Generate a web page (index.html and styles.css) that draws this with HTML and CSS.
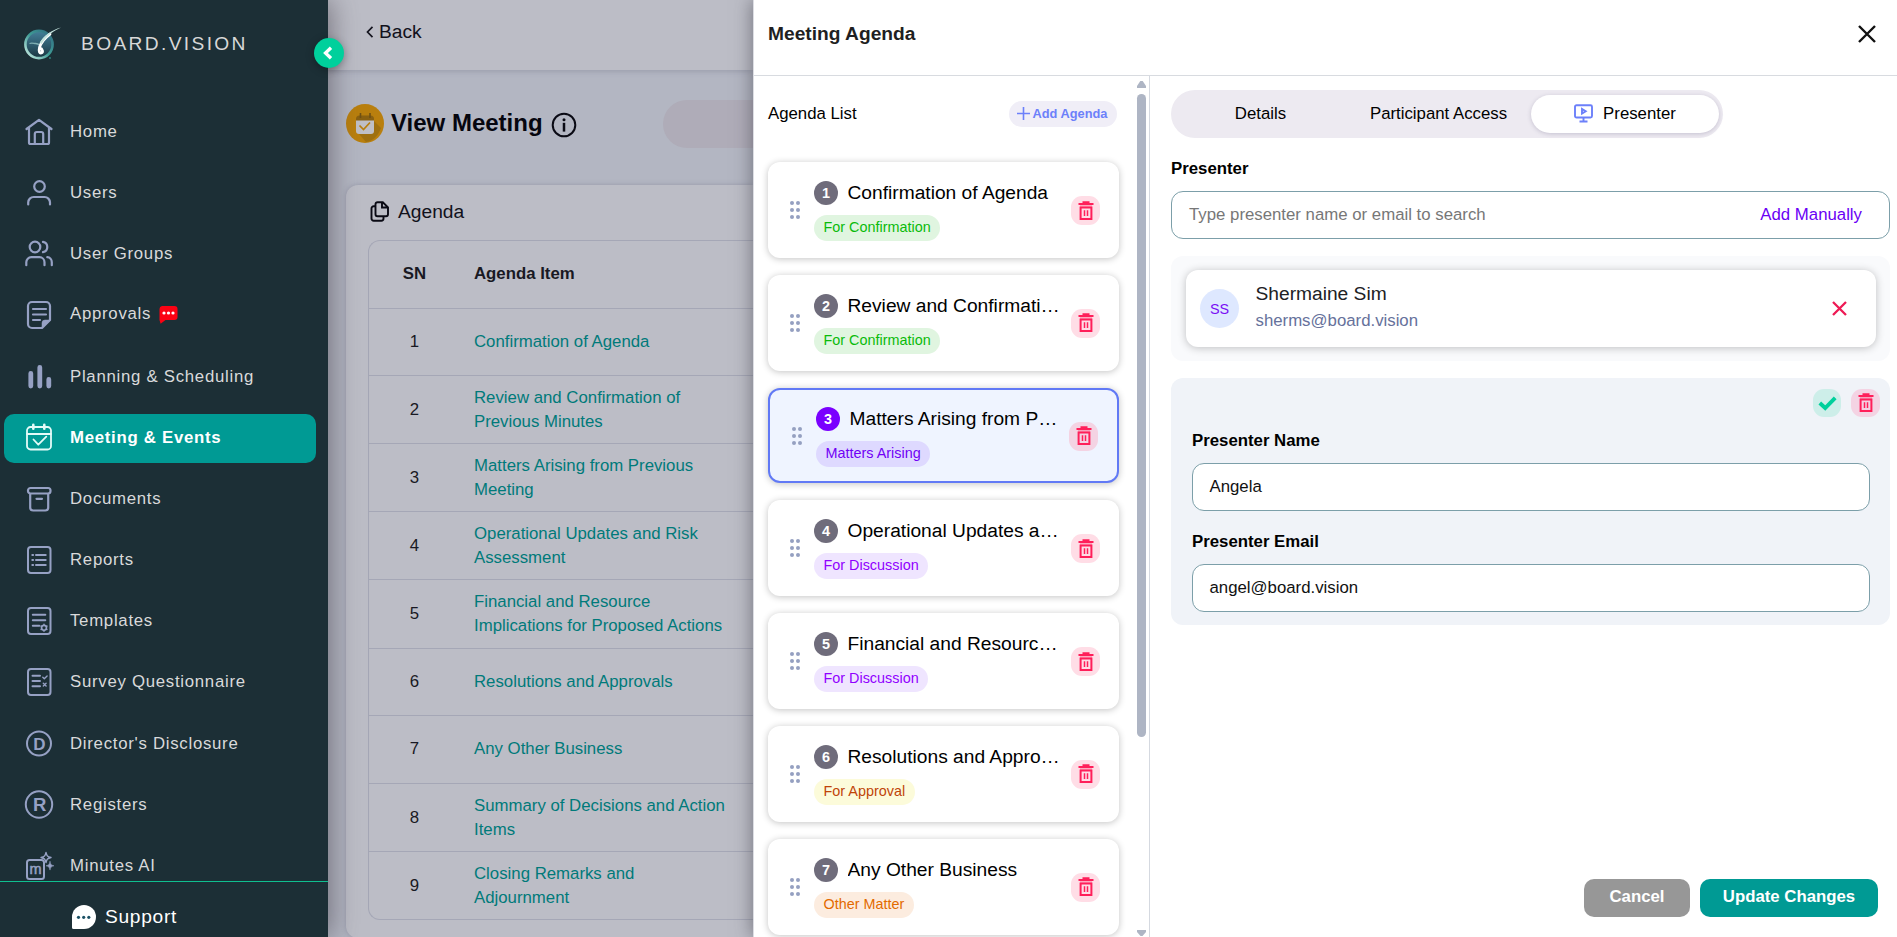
FILE: index.html
```html
<!DOCTYPE html>
<html lang="en">
<head>
<meta charset="utf-8">
<title>Board.Vision - View Meeting</title>
<link rel="stylesheet" href="styles.css">
</head>
<body>
<svg class="sprite" aria-hidden="true">
  <defs>
    <symbol id="trash" viewBox="0 0 18 20">
      <path d="M5.500 1.300h7M1.500 3h15" stroke="currentColor" stroke-width="1.900" fill="none"/>
      <path d="M3 5h12" stroke="currentColor" stroke-width="1.200" opacity=".45"/>
      <path d="M3.600 6.500h10.800v11.500H3.600z" stroke="currentColor" stroke-width="2" fill="none"/>
      <path d="M7.500 9.300v5.800M10.500 9.300v5.800" stroke="currentColor" stroke-width="1.500"/>
    </symbol>
    <symbol id="drag" viewBox="0 0 10 18">
      <g fill="#95a0c1"><circle cx="2" cy="2" r="2"/><circle cx="8" cy="2" r="2"/><circle cx="2" cy="9" r="2"/><circle cx="8" cy="9" r="2"/><circle cx="2" cy="16" r="2"/><circle cx="8" cy="16" r="2"/></g>
    </symbol>
  </defs>
</svg>
<div class="app">
  <aside class="sidebar">
    <div class="brand">
      <svg class="logo" width="38" height="34" viewBox="0 0 38 34">
        <defs>
          <linearGradient id="ring" x1="1" y1="0" x2="0" y2="1"><stop offset="0" stop-color="#2f6a80"/><stop offset=".5" stop-color="#3f9c96"/><stop offset="1" stop-color="#d3f3ea"/></linearGradient>
          <linearGradient id="disc" x1="0" y1="0" x2="0" y2="1"><stop offset="0" stop-color="#44809a"/><stop offset=".6" stop-color="#2a5566"/><stop offset="1" stop-color="#1a3540"/></linearGradient>
        </defs>
        <circle cx="15" cy="17.500" r="13.600" fill="url(#disc)" stroke="url(#ring)" stroke-width="2.600"/>
        <path d="M5.500 16.500c2-1 4-.2 6 0s3 .6 4 1.500" stroke="#7fb0b4" stroke-width="1.300" fill="none"/>
        <path d="M26 7C20.500 11 17 15.500 15.500 20.500c-1 4 .2 5.800 1.800 5.400 2-.6 1.500-4.200-1.600-4.700" stroke="#fff" stroke-width="2.800" fill="none" stroke-linecap="round"/>
        <path d="M37 .4C29 4 22 9.500 17.500 17l-1.800-1.600C20 8.500 27.500 3 37 .4z" fill="#c3e3dd"/>
        <circle cx="26" cy="31" r="1.100" fill="#2d7a76"/>
      </svg>
      <span class="brand-name">BOARD.VISION</span>
    </div>
    <nav class="nav">
      <a class="nav-item"><svg class="ico" viewBox="0 0 28 28"><path d="M1.500 11 14 1.800 26.500 11M4 10v14.500A1.500 1.500 0 0 0 5.500 26h17a1.500 1.500 0 0 0 1.500-1.500V10M9.800 25.500V16a2 2 0 0 1 2-2h4.400a2 2 0 0 1 2 2v9.500"/></svg>Home</a>
      <a class="nav-item"><svg class="ico" viewBox="0 0 28 28"><circle cx="14.500" cy="7.500" r="5.300"/><path d="M3.200 25.500V23.500a5.500 5.500 0 0 1 5.500-5.500h10.800a5.500 5.500 0 0 1 5.500 5.500v2"/></svg>Users</a>
      <a class="nav-item"><svg class="ico" viewBox="0 0 28 28"><circle cx="10" cy="7" r="5.300"/><path d="M1.300 25.200v-3a5 5 0 0 1 5-5h8.200a5 5 0 0 1 5 5v3M18 1.800a5.300 5.300 0 0 1 0 10.400M22.300 17.200a5 5 0 0 1 4.500 5v3"/></svg>User Groups</a>
      <a class="nav-item approvals"><svg class="ico" viewBox="0 0 28 28"><path d="M17 27H7a4 4 0 0 1-4-4V5a4 4 0 0 1 4-4h14a4 4 0 0 1 4 4v14z"/><path d="M8 8h13M8 13.500h13M8 19h7"/><path class="solid" d="M17 27v-5a3 3 0 0 1 3-3h5z"/></svg><span class="lift">Approvals</span>
        <svg class="chat-dot" width="19" height="18" viewBox="0 0 19 18"><path d="M3 0h12.500a3 3 0 0 1 3 3v8a3 3 0 0 1-3 3H6.500L1.600 17.800.5 14V3a3 3 0 0 1 2.500-3z" fill="#fb0213"/><g fill="#fff"><circle cx="5" cy="7" r="1.600"/><circle cx="9.500" cy="7" r="1.600"/><circle cx="14" cy="7" r="1.600"/></g></svg></a>
      <a class="nav-item"><svg class="ico bars" viewBox="0 0 28 28"><path d="M5.800 10.500v12.500M14.800 4.500v18.500M23.800 16.500v6.500"/></svg>Planning &amp; Scheduling</a>
      <a class="nav-item active"><svg class="ico cal" viewBox="0 0 28 28"><rect x="2" y="3" width="24" height="22.500" rx="3.500"/><path d="M2 10h24M8.500 15.500l4.800 5.200 8-8"/><path class="pins" d="M8.300.8v4M19.300.8v4"/></svg>Meeting &amp; Events</a>
      <a class="nav-item"><svg class="ico" viewBox="0 0 28 28"><rect x="3" y="3" width="22.500" height="5.500" rx="2.500"/><path d="M5.200 9v13.500A3 3 0 0 0 8.200 25.500h12a3 3 0 0 0 3-3V9M11.500 13.800h5.500"/></svg>Documents</a>
      <a class="nav-item"><svg class="ico thin" viewBox="0 0 28 28"><rect x="3" y="1" width="22.500" height="26" rx="3"/><path d="M11 9h9.700M11 14h9.700M11 19h9.700M7.300 9h.8M7.300 14h.8M7.300 19h.8"/></svg>Reports</a>
      <a class="nav-item"><svg class="ico thin" viewBox="0 0 28 28"><rect x="3" y="1" width="22.500" height="26" rx="3"/><path d="M7.800 7.800h12.500M7.800 13.300h12.500M7.800 18.800h6.500"/><circle cx="19" cy="20.800" r="2.300"/><path class="fine" d="M19 17.300v7M16 19.100l6 3.400M16 22.500l6-3.400"/><circle class="hole" cx="19" cy="20.800" r="1.600"/></svg>Templates</a>
      <a class="nav-item wide"><svg class="ico thin" viewBox="0 0 28 28"><rect x="3" y="1" width="22.500" height="26" rx="3"/><path d="M7.500 7.800h7.500M7.500 13h7.500M7.500 18.300h7.500"/><path class="fine" d="m17.800 9.300 1.500 1.500 2.800-2.800M18.300 15.300l2.800 2.800M21.100 15.300l-2.800 2.800"/></svg>Survey Questionnaire</a>
      <a class="nav-item"><svg class="ico thin" viewBox="0 0 28 28"><circle cx="14" cy="13.500" r="12"/><text x="14.300" y="19.500" font-size="17">D</text></svg>Director's Disclosure</a>
      <a class="nav-item"><svg class="ico thin" viewBox="0 0 28 28"><circle cx="14" cy="13.500" r="13.200"/><text x="14.700" y="20" font-size="18.500">R</text></svg>Registers</a>
      <a class="nav-item"><svg class="ico thin" viewBox="0 0 28 28"><rect x="2" y="8" width="17" height="19" rx="2.500"/><text class="light" x="10.500" y="21.500" font-size="14.500">m</text><path class="fine" d="M21 .5c.8 3.500 1.500 4 5 5-3.500 1-4.200 1.500-5 5-.8-3.500-1.500-4-5-5 3.500-1 4.200-1.500 5-5z"/><path class="spark" d="M25 9.500c.7 3 1 3.500 4 4.300-3 .8-3.300 1.300-4 4.300-.7-3-1-3.500-4-4.300 3-.8 3.300-1.300 4-4.300z"/></svg>Minutes AI</a>
    </nav>
    <div class="support">
      <svg width="24" height="24" viewBox="0 0 24 24"><path d="M12 0a12 12 0 0 1 0 24H1.500A1.500 1.500 0 0 1 0 22.500V12A12 12 0 0 1 12 0z" fill="#fff"/><g fill="#1c5266"><circle cx="6.500" cy="12.300" r="1.600"/><circle cx="11.700" cy="12.300" r="1.600"/><circle cx="16.800" cy="12.300" r="1.600"/></g></svg>
      <span>Support</span>
    </div>
    <button class="collapse"><svg width="10" height="14" viewBox="0 0 10 14"><path d="M8 1.800 2.500 7 8 12.200" stroke="#fff" stroke-width="3.300" fill="none"/></svg></button>
  </aside>

  <main class="page">
    <header class="topbar"><svg width="8" height="12" viewBox="0 0 8 12"><path d="M6.500.8 1.500 6l5 5.200" stroke="#15151f" stroke-width="1.700" fill="none"/></svg><span>Back</span></header>
    <section class="title-row">
      <svg width="38" height="39" viewBox="0 0 38 39">
        <ellipse cx="19" cy="19.500" rx="19" ry="19.500" fill="#b97f0e"/>
        <path d="M28 17 35 24C32 32 27 37 20 38L13 30z" fill="#9f7010"/>
        <path d="M10 15a3.500 3.500 0 0 1 3.500-3.500h11A3.500 3.500 0 0 1 28 15v2H10z" fill="#8a6111"/>
        <path d="M14.500 9v5M24 9v5" stroke="#6f5116" stroke-width="1.600"/>
        <path d="M10 16.500h18V27a3 3 0 0 1-3 3H13a3 3 0 0 1-3-3z" fill="#c0c0c6"/>
        <path d="m13.500 21.500 4 4 6.500-7" stroke="#b97f0e" stroke-width="1.700" fill="none"/>
      </svg>
      <h1>View Meeting</h1>
      <svg class="info" width="26" height="26" viewBox="0 0 26 26"><circle cx="13" cy="13" r="11.300" stroke="#0a0a14" stroke-width="2" fill="none"/><path d="M13 10.800v8.800" stroke="#0a0a14" stroke-width="2.500"/><circle cx="13" cy="7.700" r="1.500" fill="#0a0a14"/></svg>
      <div class="ghost-tabs"></div>
    </section>
    <section class="panel">
      <div class="panel-head"><svg width="20" height="21" viewBox="0 0 20 21"><path d="M7.500 1.200h5.300L18 6.300v6.900a2 2 0 0 1-2 2H7.500a2 2 0 0 1-2-2v-10a2 2 0 0 1 2-2zM12 1.500V6.500h5.500M5 5.200H3.700a2.200 2.200 0 0 0-2.200 2.200v10.200a2.200 2.200 0 0 0 2.200 2.200h7.600a2.200 2.200 0 0 0 2.200-2.200v-2" stroke="#0a0a14" stroke-width="1.900" fill="none"/></svg><span>Agenda</span></div>
      <div class="table">
        <div class="tr th"><span class="sn">SN</span><span class="item">Agenda Item</span></div>
        <div class="tr r67"><span class="sn">1</span><span class="item">Confirmation of Agenda</span></div>
        <div class="tr"><span class="sn">2</span><span class="item">Review and Confirmation of<br>Previous Minutes</span></div>
        <div class="tr"><span class="sn">3</span><span class="item">Matters Arising from Previous<br>Meeting</span></div>
        <div class="tr"><span class="sn">4</span><span class="item">Operational Updates and Risk<br>Assessment</span></div>
        <div class="tr r69"><span class="sn">5</span><span class="item">Financial and Resource<br>Implications for Proposed Actions</span></div>
        <div class="tr r67"><span class="sn">6</span><span class="item">Resolutions and Approvals</span></div>
        <div class="tr r68"><span class="sn">7</span><span class="item">Any Other Business</span></div>
        <div class="tr"><span class="sn">8</span><span class="item">Summary of Decisions and Action<br>Items</span></div>
        <div class="tr"><span class="sn">9</span><span class="item">Closing Remarks and<br>Adjournment</span></div>
      </div>
    </section>
  </main>

  <section class="drawer">
    <header class="drawer-head"><h2>Meeting Agenda</h2><svg width="18" height="18" viewBox="0 0 18 18"><path d="m1 1 16 16M17 1 1 17" stroke="#111" stroke-width="2.400"/></svg></header>
    <div class="drawer-body">
      <div class="list-col">
        <div class="list">
          <div class="list-head"><span>Agenda List</span><button class="add"><svg width="13" height="13" viewBox="0 0 13 13"><path d="M6.500 0v13M0 6.500h13" stroke="#6c80fa" stroke-width="1.600"/></svg>Add Agenda</button></div>
          <div class="cards">
            <article class="card"><svg class="drag"><use href="#drag"/></svg><div class="info-col"><div class="line"><b class="num">1</b><span class="name">Confirmation of Agenda</span></div><span class="tag green">For Confirmation</span></div><button class="del"><svg><use href="#trash"/></svg></button></article>
            <article class="card"><svg class="drag"><use href="#drag"/></svg><div class="info-col"><div class="line"><b class="num">2</b><span class="name">Review and Confirmation of Previous Minutes</span></div><span class="tag green">For Confirmation</span></div><button class="del"><svg><use href="#trash"/></svg></button></article>
            <article class="card selected"><svg class="drag"><use href="#drag"/></svg><div class="info-col"><div class="line"><b class="num">3</b><span class="name">Matters Arising from Previous Meeting</span></div><span class="tag indigo">Matters Arising</span></div><button class="del"><svg><use href="#trash"/></svg></button></article>
            <article class="card"><svg class="drag"><use href="#drag"/></svg><div class="info-col"><div class="line"><b class="num">4</b><span class="name">Operational Updates and Risk Assessment</span></div><span class="tag violet">For Discussion</span></div><button class="del"><svg><use href="#trash"/></svg></button></article>
            <article class="card"><svg class="drag"><use href="#drag"/></svg><div class="info-col"><div class="line"><b class="num">5</b><span class="name">Financial and Resource Implications for Proposed Actions</span></div><span class="tag violet">For Discussion</span></div><button class="del"><svg><use href="#trash"/></svg></button></article>
            <article class="card"><svg class="drag"><use href="#drag"/></svg><div class="info-col"><div class="line"><b class="num">6</b><span class="name">Resolutions and Approvals</span></div><span class="tag yellow">For Approval</span></div><button class="del"><svg><use href="#trash"/></svg></button></article>
            <article class="card"><svg class="drag"><use href="#drag"/></svg><div class="info-col"><div class="line"><b class="num">7</b><span class="name">Any Other Business</span></div><span class="tag orange">Other Matter</span></div><button class="del"><svg><use href="#trash"/></svg></button></article>
          </div>
        </div>
        <div class="scrollbar">
          <svg width="9" height="7" viewBox="0 0 9 7"><path d="M3.300 0h2.400L9 5v2H0V5z" fill="#aeb5c4"/></svg>
          <i class="thumb"></i>
          <svg class="down" width="9" height="6" viewBox="0 0 9 6"><path d="M0 0h9v2L5.500 6h-2L0 2z" fill="#aeb5c4"/></svg>
        </div>
      </div>
      <div class="detail">
        <div class="tabs">
          <span>Details</span><span>Participant Access</span>
          <span class="on"><svg width="19" height="19" viewBox="0 0 19 19"><g stroke="#6c80fa" stroke-width="1.900" fill="none"><rect x="1" y="1.200" width="17" height="12.300" rx="1.500"/><path d="M9.500 14v3M5.500 17.500h8M8 5v4.600l3.700-2.300z"/></g></svg>Presenter</span>
        </div>
        <label class="lbl">Presenter</label>
        <div class="search"><span class="ph">Type presenter name or email to search</span><span class="manual">Add Manually</span></div>
        <div class="chosen">
          <div class="person">
            <span class="avatar">SS</span>
            <div class="who"><span class="pname">Shermaine Sim</span><span class="pmail">sherms@board.vision</span></div>
            <svg width="15" height="15" viewBox="0 0 15 15"><path d="m1 1 13 13M14 1 1 14" stroke="#ee1a54" stroke-width="2.300"/></svg>
          </div>
        </div>
        <div class="form">
          <div class="form-actions">
            <button class="ok"><svg width="19" height="15" viewBox="0 0 19 15"><path d="m1.800 7 5.400 5L17.200 1.800" stroke="#00d09c" stroke-width="3.900" fill="none"/></svg></button>
            <button class="del small"><svg><use href="#trash"/></svg></button>
          </div>
          <label class="lbl">Presenter Name</label>
          <div class="field">Angela</div>
          <label class="lbl second">Presenter Email</label>
          <div class="field">angel@board.vision</div>
        </div>
        <div class="actions"><button class="btn cancel">Cancel</button><button class="btn update">Update Changes</button></div>
      </div>
    </div>
  </section>
</div>
</body>
</html>
```
FILE: styles.css
```css
* { box-sizing: border-box; }
html, body { margin: 0; height: 100%; overflow: hidden; }
body { font-family: "Liberation Sans", Arial, sans-serif; font-size: 16.8px; color: #000; }
button { border: 0; padding: 0; font-family: inherit; display: flex; align-items: center; justify-content: center; }
h1, h2 { margin: 0; }
svg { display: block; flex: none; }
.sprite { position: absolute; width: 0; height: 0; }
.app { display: grid; grid-template-columns: 328px 425px 1fr; height: 937px; overflow: hidden; }

/* Sidebar */
.sidebar { position: relative; z-index: 2; display: flex; flex-direction: column; min-height: 0; background: #1c2f36; box-shadow: 3px 0 26px rgba(60, 55, 65, .55); }
.brand { display: flex; align-items: center; gap: 19px; height: 107px; padding: 0 0 20px 24px; flex: none; }
.brand-name { color: #d8d8d8; font-size: 19.2px; letter-spacing: 2.35px; }
.nav { flex: 1; min-height: 0; overflow: hidden; padding-left: 4px; }
.nav-item { display: flex; align-items: center; height: 49px; width: 312px; margin-bottom: 12px; padding-left: 21px; border-radius: 10px; color: #d9dadb; letter-spacing: .72px; white-space: nowrap; }
.nav-item.approvals, .nav-item.wide { margin-bottom: 13px; }
.nav-item.active { margin: 13px 0 11px; padding-bottom: 2px; background: #009a94; color: #fff; font-weight: bold; }
.lift { padding-bottom: 2px; }
.chat-dot { margin-left: 8px; }
.ico { width: 28px; height: 28px; margin-right: 17px; overflow: visible; fill: none; stroke: #96a1c4; stroke-width: 2.2; stroke-linecap: round; stroke-linejoin: round; }
.ico .solid, .ico .spark { fill: #96a1c4; stroke-width: .5; }
.ico .fine { stroke-width: 1.4; }
.ico .hole { fill: #1c2f36; stroke: none; }
.ico text { fill: #96a1c4; stroke: none; font-weight: bold; text-anchor: middle; letter-spacing: 0; }
.ico text.light { font-weight: normal; stroke: #96a1c4; stroke-width: .5; }
.ico.thin { stroke-width: 2; }
.ico.bars { stroke-width: 4.8; }
.ico.cal { stroke: #e4fbf8; stroke-width: 1.8; }
.ico .pins { stroke-width: 2.6; }
.support { display: flex; align-items: center; gap: 9px; height: 56px; padding: 15px 0 0 72px; flex: none; border-top: 1px solid #0fbf90; color: #fff; font-size: 19.2px; letter-spacing: .7px; }
.collapse { position: absolute; left: 314px; top: 38px; width: 30px; height: 30px; padding-right: 2px; border-radius: 50%; background: #00d09c; box-shadow: 0 2px 8px rgba(0, 0, 0, .3); }

/* Dimmed page */
.page { min-width: 0; overflow: hidden; background: #b3b6c2; }
.topbar { display: flex; align-items: center; gap: 5px; height: 70px; padding: 0 0 7px 38px; background: #bcbdc6; box-shadow: 0 1px 6px rgba(110, 112, 135, .4); font-size: 19.2px; color: #11111b; }
.title-row { display: flex; align-items: center; height: 115px; padding: 0 0 8px 18px; }
.title-row h1 { margin-left: 7px; padding-bottom: 2px; width: 156px; font-size: 24px; color: #06060f; white-space: nowrap; }
.info { margin: 2px 0 0 4px; }
.ghost-tabs { flex: 1; height: 48px; margin-left: 86px; border-radius: 24px 0 0 24px; background: #afacb8; }
.panel { height: 753px; margin-left: 18px; padding-left: 22px; border-radius: 12px 0 0 12px; background: #bcbdc6; box-shadow: 0 0 5px rgba(110, 112, 135, .45); }
.panel-head { display: flex; align-items: center; gap: 8px; height: 55px; padding: 0 0 2px 2px; font-size: 19.2px; color: #11111b; }
.table { border: 1px solid #a5a7b6; border-right: 0; border-radius: 12px 0 0 12px; }
.tr { display: grid; grid-template-columns: 91px 1fr; align-items: center; height: 68px; border-bottom: 1px solid #a5a7b6; line-height: 24px; color: #007a7a; white-space: nowrap; }
.tr.r67 { height: 67px; }
.tr.r68 { padding-bottom: 1px; }
.tr.r69 { height: 69px; padding-bottom: 1px; }
.tr:last-child { border-bottom: 0; height: 67px; }
.tr.th { padding-bottom: 2px; font-weight: bold; color: #191923; }
.sn { text-align: center; color: #191923; }
.item { padding-left: 14px; }

/* Drawer */
.drawer { position: relative; z-index: 1; display: flex; flex-direction: column; min-width: 0; min-height: 0; border-left: 1px solid #dcdde3; background: #fff; box-shadow: -2px 0 16px rgba(60, 60, 70, .5); }
.drawer-head { display: flex; justify-content: space-between; align-items: center; height: 76px; padding: 0 21.5px 7px 14px; border-bottom: 1px solid #d8dbe0; flex: none; }
.drawer-head h2 { font-size: 19.2px; color: #1f1f22; }
.drawer-body { flex: 1; min-height: 0; display: grid; grid-template-columns: 396px 1fr; }
.list-col { display: flex; min-height: 0; border-right: 1px solid #d5d9e0; overflow: hidden; }
.list { width: 383px; padding-left: 14px; }
.list-head { display: flex; align-items: center; justify-content: space-between; height: 86px; padding: 0 20px 11px 0; }
.add { gap: 3px; width: 108px; height: 26px; padding-right: 2px; border-radius: 13px; background: #f0eef7; color: #6c80fa; font-size: 12.8px; font-weight: bold; }
.cards { display: flex; flex-direction: column; gap: 17px; }
.card { display: flex; width: 351px; height: 95.8px; padding: 19px 19px 0 22px; border-radius: 12px; background: #fff; box-shadow: 0 1px 7px rgba(0, 0, 0, .24); flex: none; }
.card.selected { border: 2px solid #6179f5; background: #eff4ff; padding-top: 17px; }
.drag { width: 10px; height: 18px; margin: 20px 14px 0 0; }
.info-col { flex: 1; min-width: 0; }
.line { display: flex; align-items: center; gap: 9.5px; height: 24px; }
.num { display: flex; align-items: center; justify-content: center; flex: none; width: 24px; height: 24px; border-radius: 50%; background: #6f6c7b; color: #fff; font-size: 14.4px; }
.selected .num { background: #7a00ff; }
.name { flex: 1; min-width: 0; font-size: 19.2px; line-height: 24px; white-space: nowrap; overflow: hidden; text-overflow: ellipsis; }
.tag { display: inline-block; height: 26px; margin-top: 10px; padding: 0 9.5px; border-radius: 13px; font-size: 14.4px; line-height: 25px; }
.green { background: #e0f5e0; color: #0abb0a; }
.indigo { background: #ded9ff; color: #7000f5; }
.violet { background: #efe5ff; color: #9100ff; }
.yellow { background: #fcfbda; color: #c04408; }
.orange { background: #fcecdf; color: #e36a00; }
.del { width: 29px; height: 29px; margin: 15px 0 0 10px; border-radius: 11px; background: #ffdde6; color: #ff1f5a; flex: none; }
.del svg { width: 18px; height: 20px; }
.selected .del, .del.small { background: #f4d3e3; }
.scrollbar { width: 9px; display: flex; flex-direction: column; padding: 5px 0 1px; }
.thumb { height: 643px; margin-top: 6px; border-radius: 5px; background: #aeb5c4; }
.down { margin-top: auto; }

/* Presenter form */
.detail { display: flex; flex-direction: column; padding: 14px 7px 20px 21px; min-width: 0; }
.tabs { display: grid; grid-template-columns: 171px 185px 188px; width: 552px; height: 48px; padding: 5px 4px; border-radius: 24px; background: #edeaf1; flex: none; }
.tabs span { display: flex; align-items: center; justify-content: center; gap: 10px; padding-bottom: 1px; border-radius: 19px; }
.tabs .on { background: #fff; box-shadow: 0 1px 4px rgba(80, 70, 110, .25); }
.lbl { display: block; font-weight: bold; line-height: 20px; }
.detail > .lbl { margin: 21px 0 12px; }
.search { display: flex; align-items: center; justify-content: space-between; height: 48px; padding: 0 27px 0 17px; border: 1px solid #7c9fa9; border-radius: 12px; background: #fff; flex: none; }
.ph { color: #777; }
.manual { color: #6a00f5; }
.chosen { height: 105px; margin-top: 17px; padding: 14px 14px 14px 15px; border-radius: 12px; background: #f9fafc; flex: none; }
.person { display: flex; align-items: center; height: 77px; padding: 0 29px 0 14px; border-radius: 12px; background: #fff; box-shadow: 0 1px 8px rgba(0, 0, 0, .24); }
.avatar { display: flex; align-items: center; justify-content: center; width: 39px; height: 39px; border-radius: 50%; background: #dee8ff; color: #7a0df5; font-size: 14.4px; }
.who { flex: 1; display: flex; flex-direction: column; padding: 0 0 2px 16.5px; }
.pname { font-size: 19.2px; line-height: 26px; color: #202124; }
.pmail { line-height: 28px; color: #66719b; }
.form { height: 247px; margin-top: 17px; padding: 11px 20px 0 21px; border-radius: 12px; background: #f0f3f8; flex: none; }
.form-actions { display: flex; justify-content: flex-end; gap: 10px; height: 28px; margin-right: -10px; }
.ok { width: 28px; height: 28px; border-radius: 11px; background: #cdeee9; }
.del.small { height: 28px; margin: 0; }
.form .lbl { margin: 14px 0 12px; }
.form .lbl.second { margin: 21px 0 12px; }
.field { display: flex; align-items: center; height: 48px; padding: 0 16.5px 1px; border: 1px solid #7c9fa9; border-radius: 12px; background: #fff; color: #111; }
.actions { display: flex; justify-content: flex-end; gap: 10px; margin-top: auto; padding-right: 12px; }
.btn { height: 38px; padding-bottom: 2px; border-radius: 10px; color: #fff; font-size: 16.8px; font-weight: bold; }
.cancel { width: 106px; background: #979797; }
.update { width: 178px; background: #009a94; }
```
